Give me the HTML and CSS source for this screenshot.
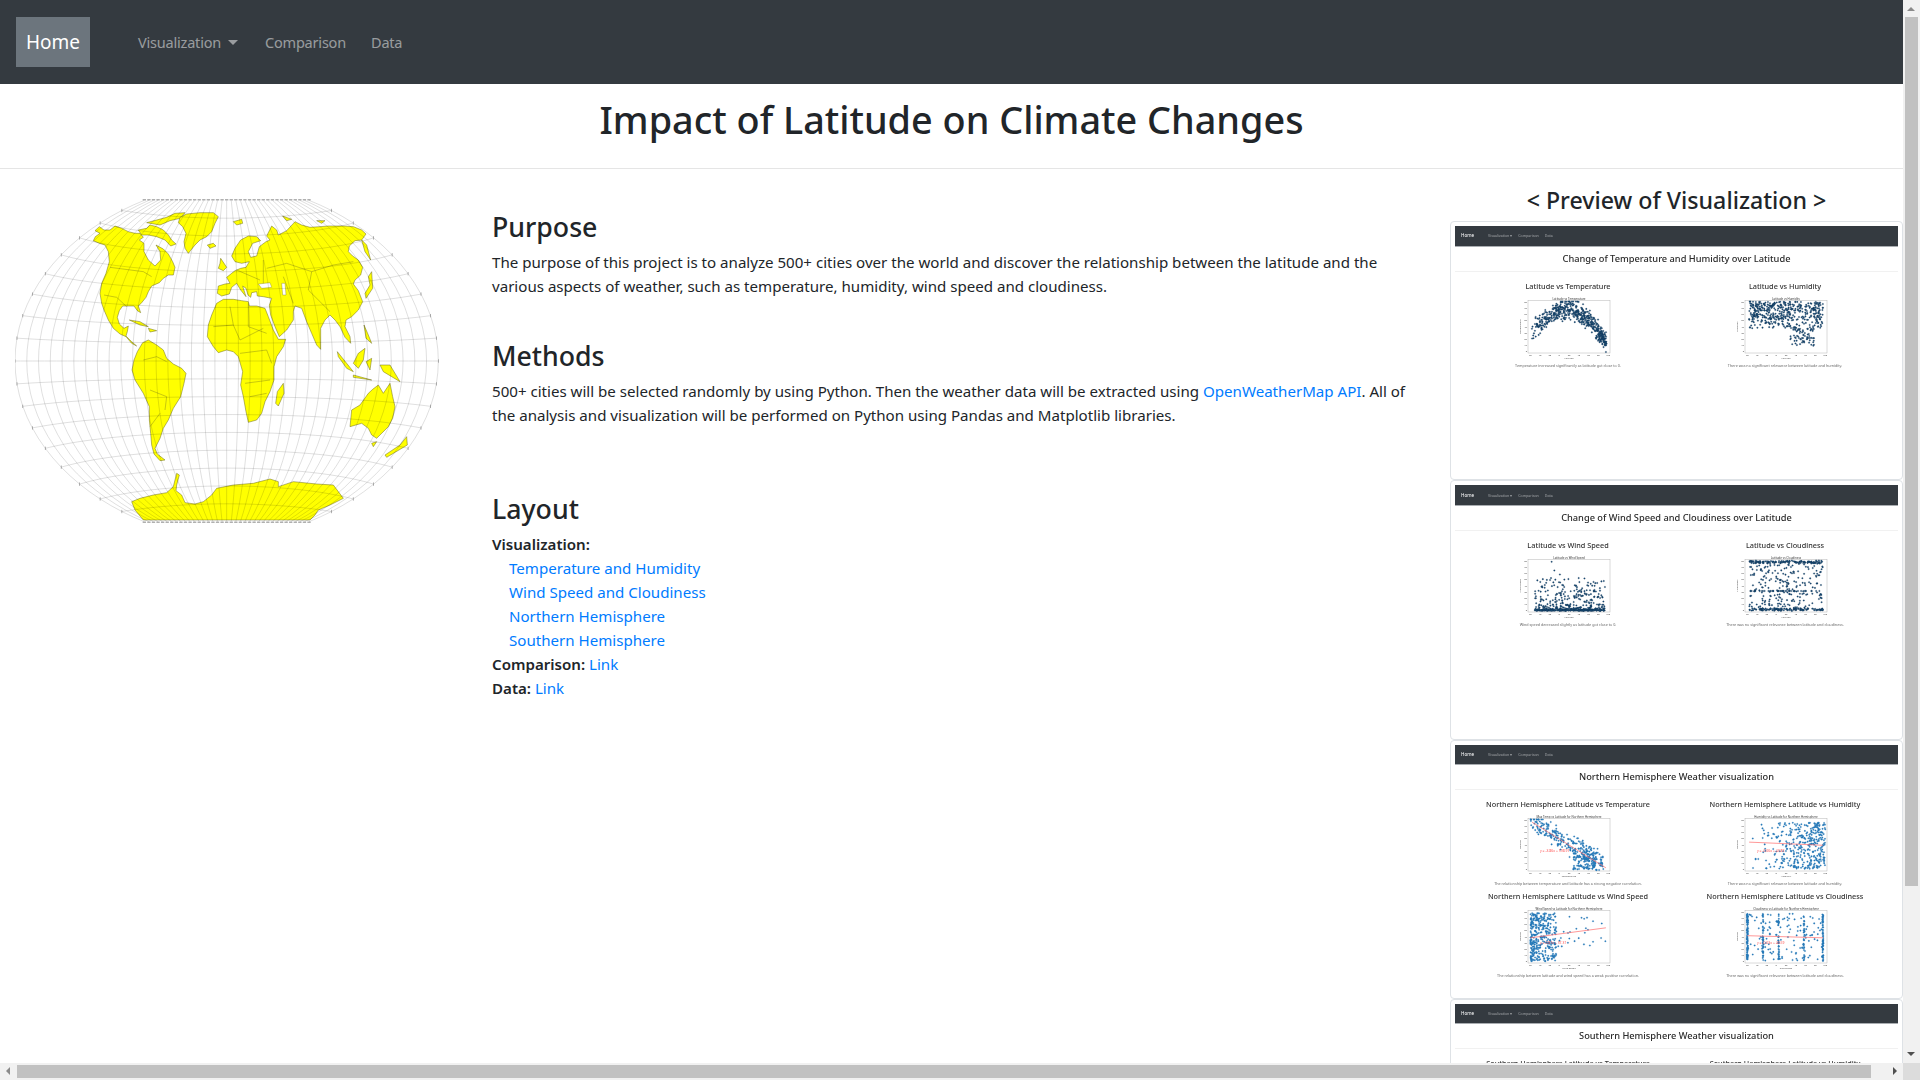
FILE: index.html
```html
<!DOCTYPE html>
<html lang="en">
<head>
  <meta charset="UTF-8" />
  <title>Impact of Latitude on Climate Changes</title>
  <link rel="stylesheet" href="styles.css">
</head>
<body>

  <nav class="navbar">
    <a class="brand" href="#">Home</a>
    <a class="nav-link nav-first" href="#">Visualization <span class="caret"></span></a>
    <a class="nav-link nav-second" href="#">Comparison</a>
    <a class="nav-link" href="#">Data</a>
  </nav>

  <header class="page-title">
    <h1>Impact of Latitude on Climate Changes</h1>
  </header>

  <main class="row">
    <div class="col-map">
      <svg class="world" viewBox="45 30 1335 1020" width="445" height="340">
        <g class="land">
          <!-- north america -->
          <path d="M280,182 L286,170 L300,160 L285,152 L298,140 L312,150 L330,150 L345,138 L365,145 L385,155 L405,160 L420,160 L430,172 L418,180 L432,190 L432,215 L445,240 L465,258 L482,240 L480,215 L468,195 L490,207 L505,222 L518,245 L525,262 L520,285 L505,285 L490,295 L478,308 L455,318 L445,335 L438,352 L425,368 L415,378 L422,398 L412,392 L402,378 L385,378 L368,378 L358,392 L352,412 L358,432 L372,445 L385,438 L382,455 L378,468 L395,485 L410,498 L395,490 L378,470 L360,462 L340,445 L325,420 L312,390 L305,370 L300,340 L305,310 L318,280 L328,245 L325,215 L315,195 L298,190 Z" />
          <path d="M415,150 L440,145 L450,135 L470,140 L490,150 L505,165 L515,180 L528,192 L512,198 L495,180 L470,170 L445,165 L425,165 Z" />
          <path d="M440,128 L470,120 L500,112 L525,100 L555,98 L540,115 L510,122 L480,135 Z" />
          <path d="M388,420 L420,425 L445,440 L420,435 Z" />
          <path d="M445,445 L470,452 L450,456 Z" />
          <!-- greenland, iceland, svalbard -->
          <path d="M540,112 L560,102 L600,98 L640,98 L655,110 L645,130 L635,155 L620,170 L600,180 L585,195 L565,220 L555,205 L552,185 L558,160 L548,140 L535,128 Z" />
          <path d="M622,195 L640,190 L648,198 L630,205 Z" />
          <path d="M700,125 L725,118 L728,130 L710,135 Z" />
          <path d="M848,108 L875,118 L860,122 Z" />
          <path d="M950,122 L975,122 L965,130 Z" />
          <!-- south america -->
          <path d="M428,488 L445,480 L470,495 L490,510 L500,535 L520,552 L545,565 L558,580 L552,610 L542,650 L520,685 L505,720 L490,745 L480,775 L465,805 L472,822 L495,840 L480,842 L462,822 L455,795 L452,760 L448,720 L448,680 L430,640 L405,600 L396,570 L402,540 L412,515 Z" />
          <!-- africa -->
          <path d="M650,370 L670,358 L700,358 L725,362 L745,365 L748,378 L770,378 L795,385 L805,410 L820,450 L835,478 L857,478 L850,500 L830,530 L822,560 L822,600 L810,635 L795,665 L785,700 L770,720 L745,727 L738,695 L730,650 L722,615 L728,575 L715,530 L700,515 L680,510 L655,518 L640,500 L622,470 L625,435 L635,405 Z" />
          <path d="M850,610 L852,640 L835,678 L827,670 L832,635 Z" />
          <!-- eurasia -->
          <path d="M655,318 L675,312 L690,310 L680,292 L695,280 L705,272 L722,265 L738,262 L748,245 L725,250 L705,245 L695,228 L705,205 L722,180 L745,168 L770,170 L782,182 L758,190 L745,215 L752,232 L770,228 L778,200 L798,185 L810,180 L800,168 L815,138 L830,150 L835,165 L860,152 L885,125 L905,135 L930,142 L960,140 L985,138 L1030,138 L1060,140 L1085,150 L1098,162 L1085,180 L1065,182 L1048,198 L1045,215 L1058,228 L1075,240 L1088,262 L1082,285 L1065,300 L1060,312 L1075,332 L1088,365 L1075,390 L1055,410 L1038,420 L1035,440 L1050,470 L1052,490 L1035,472 L1020,440 L1005,420 L990,405 L975,420 L962,445 L962,508 L950,495 L935,460 L920,425 L905,385 L885,378 L880,395 L880,420 L860,450 L838,470 L825,440 L812,405 L808,375 L815,355 L790,350 L772,348 L770,335 L755,338 L752,352 L744,345 L738,325 L728,318 L738,350 L722,330 L710,310 L695,322 L688,342 L665,348 L652,340 Z" />
          <path d="M1085,180 L1100,195 L1112,240 L1095,215 Z" />
          <path d="M1115,275 L1118,325 L1098,355 L1095,340 L1110,315 L1105,290 Z" />
          <path d="M662,235 L680,262 L670,272 L655,265 L660,250 Z" />
          <!-- islands -->
          <path d="M1012,515 L1040,550 L1060,575 L1040,565 L1015,530 Z" />
          <path d="M1060,585 L1115,600 L1060,592 Z" />
          <path d="M1060,550 L1075,520 L1095,505 L1090,540 L1075,565 Z" />
          <path d="M1098,545 L1115,535 L1110,570 Z" />
          <path d="M1092,435 L1105,465 L1115,490 L1098,475 Z" />
          <path d="M1140,555 L1170,555 L1200,605 L1175,590 L1150,575 Z" />
          <!-- australia, new zealand -->
          <path d="M1050,740 L1055,690 L1080,675 L1105,640 L1118,628 L1135,615 L1150,640 L1170,610 L1178,650 L1185,680 L1178,715 L1165,740 L1130,775 L1115,765 L1105,745 L1085,730 Z" />
          <path d="M1115,790 L1130,785 L1120,800 Z" />
          <path d="M1220,770 L1222,795 L1160,832 L1155,825 L1200,795 Z" />
          <!-- antarctica -->
          <path d="M395,965 L420,955 L460,945 L500,938 L520,920 L530,880 L538,885 L530,915 L528,932 L545,945 L555,968 L585,972 L610,965 L635,945 L650,925 L700,915 L760,910 L810,897 L835,905 L835,920 L880,905 L950,912 L1000,915 L1030,955 L990,975 L955,990 L945,1005 L930,1020 L430,1020 L405,990 Z" />
        </g>
        <g class="seas">
          <path d="M775,312 L810,308 L815,322 L785,325 Z" />
          <path d="M845,310 L855,310 L858,345 L848,345 Z" />
        </g>
        <g class="borders">
          <path d="M330,262 L430,275 L455,290" />
          <path d="M312,345 L350,352 L380,380" />
          <path d="M430,540 L470,530 L500,545 M450,630 L500,650 L495,690 M480,700 L450,740" />
          <path d="M640,440 L700,435 L720,480 L790,445 M700,435 L690,380 M745,370 L745,440 L800,460 M720,520 L800,510 L815,550 M735,610 L810,600 M750,650 L800,640" />
          <path d="M800,265 L860,250 L935,275 L1000,255 L1060,245 M935,275 L925,330 L990,395 M850,290 L880,370 M710,270 L780,300 M790,240 L790,310" />
        </g>
        <g id="graticule" class="graticule"></g>
      </svg>
    </div>

    <div class="col-text">
      <h3>Purpose</h3>
      <p>The purpose of this project is to analyze 500+ cities over the world and discover the relationship between the latitude and the various aspects of weather, such as temperature, humidity, wind speed and cloudiness.</p>

      <h3 class="methods">Methods</h3>
      <p>500+ cities will be selected randomly by using Python. Then the weather data will be extracted using <a href="#">OpenWeatherMap API</a>. All of the analysis and visualization will be performed on Python using Pandas and Matplotlib libraries.</p>

      <h3 class="layout">Layout</h3>
      <div class="links">
        <b>Visualization:</b>
        <ul>
          <li><a href="#">Temperature and Humidity</a></li>
          <li><a href="#">Wind Speed and Cloudiness</a></li>
          <li><a href="#">Northern Hemisphere</a></li>
          <li><a href="#">Southern Hemisphere</a></li>
        </ul>
        <div><b>Comparison:</b> <a href="#">Link</a></div>
        <div><b>Data:</b> <a href="#">Link</a></div>
      </div>
    </div>

    <aside class="col-preview">
      <h4>&lt; Preview of Visualization &gt;</h4>

      <div class="thumb">
        <div class="mini">
          <div class="mini-nav"><b>Home</b><span>Visualization ▾</span><span>Comparison</span><span>Data</span></div>
          <div class="mini-title">Change of Temperature and Humidity over Latitude</div>
          <div class="mini-grid">
            <div class="mini-col">
              <div class="mini-sub">Latitude vs Temperature</div>
              <svg class="plot" data-kind="temp" data-title="Latitude vs Temperature" data-x="Latitude" data-y="Temperature" viewBox="0 0 100 63"></svg>
              <div class="mini-cap">Temperature increased significantly as latitude got close to 0.</div>
            </div>
            <div class="mini-col">
              <div class="mini-sub">Latitude vs Humidity</div>
              <svg class="plot" data-kind="hum" data-title="Latitude vs Humidity" data-x="Latitude" data-y="Humidity" viewBox="0 0 100 63"></svg>
              <div class="mini-cap">There was no significant relevance between latitude and humidity.</div>
            </div>
          </div>
        </div>
      </div>

      <div class="thumb">
        <div class="mini">
          <div class="mini-nav"><b>Home</b><span>Visualization ▾</span><span>Comparison</span><span>Data</span></div>
          <div class="mini-title">Change of Wind Speed and Cloudiness over Latitude</div>
          <div class="mini-grid">
            <div class="mini-col">
              <div class="mini-sub">Latitude vs Wind Speed</div>
              <svg class="plot" data-kind="wind" data-title="Latitude vs Wind Speed" data-x="Latitude" data-y="Wind Speed" viewBox="0 0 100 63"></svg>
              <div class="mini-cap">Wind speed decreased slightly as latitude got close to 0.</div>
            </div>
            <div class="mini-col">
              <div class="mini-sub">Latitude vs Cloudiness</div>
              <svg class="plot" data-kind="cloud" data-title="Latitude vs Cloudiness" data-x="Latitude" data-y="Cloudiness" viewBox="0 0 100 63"></svg>
              <div class="mini-cap">There was no significant relevance between latitude and cloudiness.</div>
            </div>
          </div>
        </div>
      </div>

      <div class="thumb">
        <div class="mini">
          <div class="mini-nav"><b>Home</b><span>Visualization ▾</span><span>Comparison</span><span>Data</span></div>
          <div class="mini-title">Northern Hemisphere Weather visualization</div>
          <div class="mini-grid">
            <div class="mini-col">
              <div class="mini-sub">Northern Hemisphere Latitude vs Temperature</div>
              <svg class="plot" data-kind="ntemp" data-title="Max Temp vs Latitude for Northern Hemisphere" data-x="Temperature" data-y="Latitude" data-eq="y = -3.86x + 598.97" viewBox="0 0 100 63"></svg>
              <div class="mini-cap">The relationship between temperature and latitude has a strong negative correlation.</div>
            </div>
            <div class="mini-col">
              <div class="mini-sub">Northern Hemisphere Latitude vs Humidity</div>
              <svg class="plot" data-kind="nhum" data-title="Humidity vs Latitude for Northern Hemisphere" data-x="Humidity" data-y="Latitude" data-eq="y = -0.06x + 43.83" viewBox="0 0 100 63"></svg>
              <div class="mini-cap">There was no significant relevance between latitude and humidity.</div>
            </div>
            <div class="mini-col">
              <div class="mini-sub">Northern Hemisphere Latitude vs Wind Speed</div>
              <svg class="plot" data-kind="nwind" data-title="Wind Speed vs Latitude for Northern Hemisphere" data-x="Wind Speed" data-y="Latitude" data-eq="y = 0.87x + 37.31" viewBox="0 0 100 63"></svg>
              <div class="mini-cap">The relationship between latitude and wind speed has a weak positive correlation.</div>
            </div>
            <div class="mini-col">
              <div class="mini-sub">Northern Hemisphere Latitude vs Cloudiness</div>
              <svg class="plot" data-kind="ncloud" data-title="Cloudiness vs Latitude for Northern Hemisphere" data-x="Cloudiness" data-y="Latitude" data-eq="y = -0.03x + 40.59" viewBox="0 0 100 63"></svg>
              <div class="mini-cap">There was no significant relevance between latitude and cloudiness.</div>
            </div>
          </div>
        </div>
      </div>

      <div class="thumb">
        <div class="mini">
          <div class="mini-nav"><b>Home</b><span>Visualization ▾</span><span>Comparison</span><span>Data</span></div>
          <div class="mini-title">Southern Hemisphere Weather visualization</div>
          <div class="mini-grid">
            <div class="mini-col"><div class="mini-sub">Southern Hemisphere Latitude vs Temperature</div></div>
            <div class="mini-col"><div class="mini-sub">Southern Hemisphere Latitude vs Humidity</div></div>
          </div>
        </div>
      </div>
    </aside>
  </main>

  <div class="scroll-v">
    <span class="arrow arrow-up"></span>
    <div class="thumb-v"></div>
    <span class="arrow arrow-down"></span>
  </div>
  <div class="scroll-h">
    <span class="arrow arrow-left"></span>
    <div class="thumb-h"></div>
    <span class="arrow arrow-right"></span>
  </div>
  <div class="scroll-corner"></div>

  <script src="script.js"></script>
</body>
</html>
```

FILE: styles.css
```css
* { box-sizing: border-box; }
html, body { height: 100%; }
body { margin: 0; width: 1920px; height: 1080px; overflow: hidden; background: #fff; color: #212529; font-family: "Noto Sans", sans-serif; font-size: 15.1px; line-height: 24px; }
a { color: #007bff; text-decoration: none; }

.navbar { display: flex; align-items: center; height: 84px; padding: 0 16px; background: #343a40; }
.brand { display: block; width: 74px; height: 50px; margin-right: 40px; background: #6c757d; color: #fff; font-size: 19px; line-height: 50px; text-align: center; }
.nav-link { padding: 0 8px; color: rgba(255,255,255,.5); font-size: 14.5px; letter-spacing: -.2px; }
.nav-first { width: 127px; }
.nav-second { width: 106px; }
.caret { display: inline-block; margin-left: 3px; vertical-align: 3px; border-top: 5px solid rgba(255,255,255,.5); border-left: 5px solid transparent; border-right: 5px solid transparent; }

.page-title { width: 1903px; height: 85px; padding-top: 12px; border-bottom: 1px solid #e5e5e5; text-align: center; }
h1 { margin: 0; font-size: 37.8px; font-weight: 500; line-height: 48px; }

.row { display: flex; width: 1903px; height: 911px; overflow: hidden; }
.col-map { width: 477px; padding: 21px 0 0 15px; }
.world { display: block; filter: blur(.35px); }
.land path { fill: #ffff00; stroke: #6b6b20; stroke-width: 1.5; stroke-linejoin: round; }
.seas path { fill: #fff; stroke: #6b6b20; stroke-width: 1; }
.borders path { fill: none; stroke: #77771c; stroke-width: 1.2; }
.graticule path { fill: none; stroke: #000; stroke-opacity: .24; stroke-width: 1.6; }
.graticule rect { fill: #8a8a8a; }

.col-text { width: 973px; padding: 41px 37px 0 15px; }
h3 { margin: 0 0 6px; font-size: 26.7px; font-weight: 500; line-height: 33.6px; }
h3.methods { margin-top: 41px; margin-bottom: 7px; }
h3.layout { margin-top: 64.5px; margin-bottom: 6.5px; }
p { margin: 0; }
.links ul { margin: 0; padding: 0 0 0 17px; list-style: none; }
.links b { font-weight: 600; }

.col-preview { width: 453px; padding-top: 17px; }
h4 { margin: 0 0 6px; font-size: 23.2px; font-weight: 500; line-height: 29px; text-align: center; }
.thumb { height: 259.3px; padding: 4px; border: 1px solid #dee2e6; border-radius: 4px; background: #fff; overflow: hidden; }

.mini { filter: blur(.3px); }
.mini-nav { display: flex; align-items: center; height: 20.5px; padding-left: 6px; background: #343a40; border-bottom: 1px solid #a9adb1; color: rgba(255,255,255,.5); font-size: 3.6px; line-height: 21px; }
.mini-nav b { margin-right: 14px; color: #fff; font-size: 4.6px; font-weight: 400; }
.mini-nav span { margin-right: 6px; }
.mini-title { height: 25px; border-bottom: 1px solid #f1f1f1; color: #2a2a2a; font-size: 9.25px; font-weight: 500; line-height: 23px; text-align: center; }
.mini-grid { display: grid; grid-template-columns: 217px 217px; row-gap: 4px; justify-content: center; padding-top: 9px; }
.mini-col { text-align: center; height: 88px; }
.mini-sub { height: 10px; color: #333; font-size: 7.3px; font-weight: 500; line-height: 10px; white-space: nowrap; }
.plot { display: block; width: 100px; height: 63px; margin: 6px auto 3px; }
.plot text { font-family: "Noto Sans", sans-serif; font-size: 2.4px; fill: #555; }
.plot .plot-title { font-size: 2.9px; fill: #333; }
.plot .plot-eq { font-size: 3.4px; fill: #ff5555; }
.plot .axes { fill: #fff; stroke: #b5b5b5; stroke-width: .5; }
.plot .dots circle { stroke-width: .2; }
.plot .fit { fill: none; stroke: #ff6b6b; stroke-width: .7; }
.mini-cap { height: 6px; color: #666; font-size: 3.7px; line-height: 6px; white-space: nowrap; }

.scroll-v { position: fixed; top: 0; right: 0; width: 17px; height: 1063px; background: #f1f1f1; }
.thumb-v { position: absolute; top: 17px; left: 2px; width: 13px; height: 869px; background: #c1c1c1; }
.scroll-h { position: fixed; left: 0; bottom: 0; width: 1903px; height: 17px; background: #f1f1f1; }
.thumb-h { position: absolute; top: 2px; left: 17px; width: 1854px; height: 13px; background: #c1c1c1; }
.scroll-corner { position: fixed; right: 0; bottom: 0; width: 17px; height: 17px; background: #dcdcdc; }
.arrow { position: absolute; width: 0; height: 0; border: 4px solid transparent; }
.arrow-up { top: 3px; left: 4px; border-bottom-color: #8a8a8a; }
.arrow-down { bottom: 3px; left: 4px; border-top-color: #505050; }
.arrow-left { left: 2px; top: 4px; border-right-color: #8a8a8a; }
.arrow-right { right: 2px; top: 4px; border-left-color: #505050; }
```

FILE: script.js
```js
// seeded so the picture is the same on every load
let seed = 12345;
function rnd() {
  seed = (seed * 16807) % 2147483647;
  return seed / 2147483647;
}
function gauss() {
  return (rnd() + rnd() + rnd() - 1.5) / 1.5;
}

const NS = 'http://www.w3.org/2000/svg';

function make(tag, attrs, parent, text) {
  const el = document.createElementNS(NS, tag);
  for (const k in attrs) el.setAttribute(k, attrs[k]);
  if (text) el.textContent = text;
  parent.appendChild(el);
  return el;
}

// winkel tripel, stretched to the box of the map picture
function project(lon, lat) {
  const l = lon * Math.PI / 180;
  const p = lat * Math.PI / 180;
  const a = Math.acos(Math.cos(p) * Math.cos(l / 2));
  const s = a < 1e-6 ? 1 : Math.sin(a) / a;
  const x = 0.5 * (l * 2 / Math.PI + 2 * Math.cos(p) * Math.sin(l / 2) / s);
  const y = 0.5 * (p + Math.sin(p) / s);
  return [680 + x * 635 / 2.5708, 543 - y * 482 / (Math.PI / 2)];
}

function drawGraticule() {
  const g = document.getElementById('graticule');
  for (let lon = -180; lon <= 180; lon += 10) {
    let d = '';
    for (let lat = -90; lat <= 90; lat += 5) {
      const pt = project(lon, lat);
      d += (d ? 'L' : 'M') + pt[0].toFixed(1) + ',' + pt[1].toFixed(1);
    }
    make('path', { d: d }, g);
    const top = project(lon, 90);
    const bottom = project(lon, -90);
    make('rect', { x: top[0] - 5, y: top[1] - 3, width: 10, height: 3 }, g);
    make('rect', { x: bottom[0] - 5, y: bottom[1], width: 10, height: 3 }, g);
  }
  for (let lat = -80; lat <= 80; lat += 10) {
    let d = '';
    for (let lon = -180; lon <= 180; lon += 5) {
      const pt = project(lon, lat);
      d += (d ? 'L' : 'M') + pt[0].toFixed(1) + ',' + pt[1].toFixed(1);
    }
    make('path', { d: d }, g);
    const left = project(-180, lat);
    const right = project(180, lat);
    make('rect', { x: left[0] - 1, y: left[1] - 5, width: 2, height: 10 }, g);
    make('rect', { x: right[0] - 1, y: right[1] - 5, width: 2, height: 10 }, g);
  }
}

// every generator gives x and y from 0 to 1 inside the axes
const generators = {
  temp() {
    const x = 0.04 + Math.pow(rnd(), 0.75) * 0.92;
    const peak = 1 - Math.pow((x - 0.47) / 0.55, 2) * 1.05;
    return [x, peak * 0.8 + gauss() * 0.27 + 0.03];
  },
  hum() {
    const x = 0.05 + rnd() * 0.9;
    const low = x > 0.55 && x < 0.85 && rnd() < 0.45;
    return [x, low ? 0.14 + rnd() * 0.35 : 0.45 + Math.pow(rnd(), 0.7) * 0.53];
  },
  wind() {
    const x = 0.08 + rnd() * 0.86;
    return [x, 0.03 + Math.pow(rnd(), 4.5) * 0.62 + (rnd() < 0.02 ? 0.35 : 0)];
  },
  cloud() {
    const x = 0.05 + rnd() * 0.9;
    const r = rnd();
    if (r < 0.22) return [x, 0.97 - rnd() * 0.04];
    if (r < 0.42) return [x, 0.03 + rnd() * 0.04];
    if (r < 0.5) return [x, 0.4];
    return [x, rnd()];
  },
  ntemp() {
    if (rnd() < 0.28) return [0.55 + rnd() * 0.27, 0.03 + rnd() * 0.3];
    const x = 0.03 + Math.pow(rnd(), 0.9) * 0.9;
    return [x, 0.97 - x * 0.9 + gauss() * 0.28];
  },
  nhum() {
    const x = 0.05 + Math.pow(rnd(), 0.45) * 0.93;
    return [x, 0.04 + rnd() * 0.88];
  },
  nwind() {
    if (rnd() < 0.08) return [0.3 + rnd() * 0.66, 0.3 + rnd() * 0.6];
    return [0.03 + Math.pow(rnd(), 1.6) * 0.32, 0.03 + rnd() * 0.92];
  },
  ncloud() {
    const bands = [0.03, 0.03, 0.03, 0.22, 0.41, 0.72, 0.95, 0.95];
    const x = rnd() < 0.7 ? bands[Math.floor(rnd() * 8)] + gauss() * 0.01 : 0.05 + rnd() * 0.9;
    return [x, 0.04 + rnd() * 0.9];
  }
};

const fits = {
  ntemp: [0.05, 0.93, 0.95, 0.06],
  nhum: [0.05, 0.55, 0.95, 0.49],
  nwind: [0.03, 0.48, 0.95, 0.67],
  ncloud: [0.03, 0.52, 0.95, 0.48]
};

function drawPlot(svg) {
  const kind = svg.dataset.kind;
  const ax = { x: 10, y: 3.5, w: 82, h: 52.5 };
  const north = kind in fits;

  make('text', { x: 51, y: 2.6, 'text-anchor': 'middle', class: 'plot-title' }, svg, svg.dataset.title);
  make('rect', { x: ax.x, y: ax.y, width: ax.w, height: ax.h, class: 'axes' }, svg);

  for (let i = 0; i <= 8; i++) {
    const tx = ax.x + 2 + i * (ax.w - 4) / 8;
    make('text', { x: tx, y: ax.y + ax.h + 2.8, 'text-anchor': 'middle' }, svg, String(-60 + i * 20));
    const ty = ax.y + ax.h - 2 - i * (ax.h - 4) / 8;
    make('text', { x: ax.x - 1, y: ty + 0.8, 'text-anchor': 'end' }, svg, String(i * 10));
  }
  make('text', { x: 51, y: ax.y + ax.h + 5.6, 'text-anchor': 'middle' }, svg, svg.dataset.x);
  make('text', { x: 3, y: ax.y + ax.h / 2, 'text-anchor': 'middle', transform: 'rotate(-90 3 ' + (ax.y + ax.h / 2) + ')' }, svg, svg.dataset.y);

  const dots = make('g', { class: 'dots' }, svg);
  const count = north ? 380 : 520;
  for (let i = 0; i < count; i++) {
    const pt = generators[kind]();
    const px = Math.min(Math.max(pt[0], 0.02), 0.98);
    const py = Math.min(Math.max(pt[1], 0.02), 0.98);
    make('circle', {
      cx: (ax.x + px * ax.w).toFixed(2),
      cy: (ax.y + (1 - py) * ax.h).toFixed(2),
      r: 0.8,
      fill: north ? '#2b7bba' : '#1b4f7a',
      stroke: north ? '#1f77b4' : '#0d2a44'
    }, dots);
  }

  if (north) {
    const f = fits[kind];
    make('path', {
      class: 'fit',
      d: 'M' + (ax.x + f[0] * ax.w) + ',' + (ax.y + (1 - f[1]) * ax.h) + 'L' + (ax.x + f[2] * ax.w) + ',' + (ax.y + (1 - f[3]) * ax.h)
    }, svg);
    make('text', { x: ax.x + 12, y: ax.y + 33, class: 'plot-eq' }, svg, svg.dataset.eq);
  }
}

drawGraticule();
document.querySelectorAll('.plot').forEach(drawPlot);
```
